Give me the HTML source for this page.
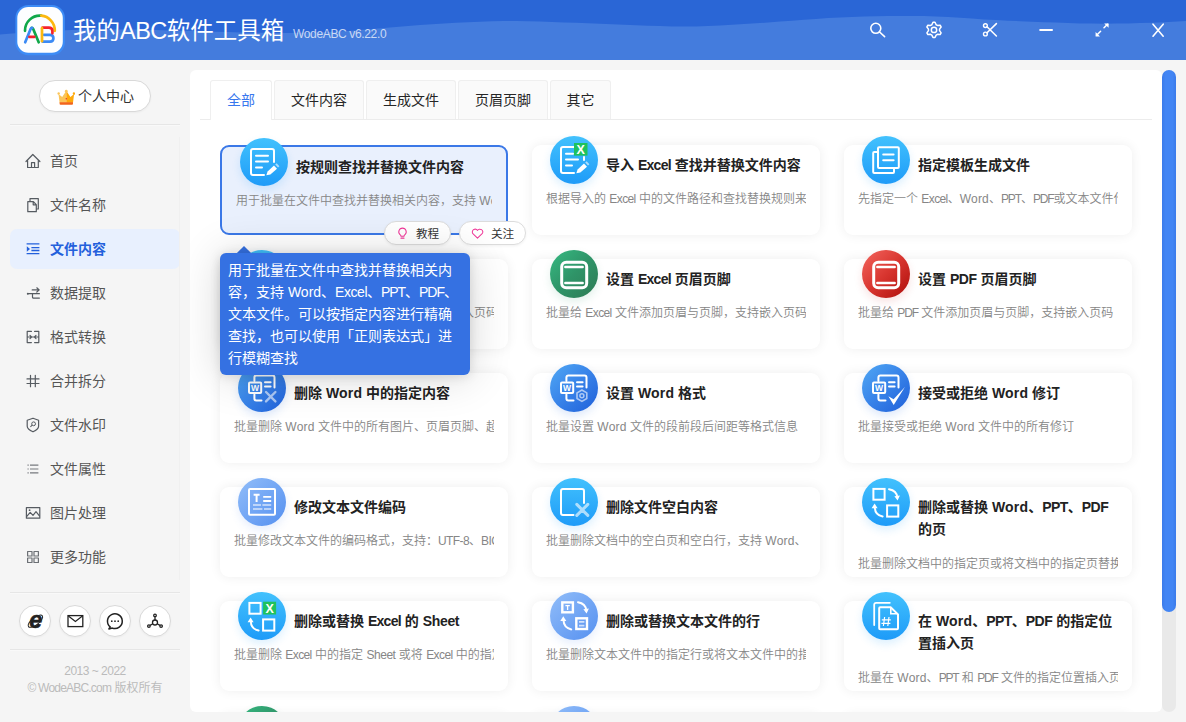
<!DOCTYPE html>
<html lang="zh-CN">
<head>
<meta charset="utf-8">
<title>我的ABC软件工具箱</title>
<style>
*{box-sizing:border-box;margin:0;padding:0}
html,body{width:1186px;height:722px;overflow:hidden;background:#f5f5f5}
body{font-family:"Liberation Sans","Noto Sans CJK SC",sans-serif;font-size:14px;color:#333;position:relative}
.abs{position:absolute}
/* header */
#hd{position:absolute;left:0;top:0;width:1186px;height:60px;background:#2a66d6;overflow:hidden}
#hd svg.wave{position:absolute;left:0;top:0}
#logo{position:absolute;left:14px;top:4px;width:52px;height:52px}
#ttl{position:absolute;left:73px;top:14px;height:34px;line-height:34px;font-size:23.5px;color:#fff;white-space:nowrap;letter-spacing:0}
#ver{position:absolute;left:293px;top:26px;height:16px;line-height:16px;font-size:12px;color:rgba(255,255,255,.72);white-space:nowrap;letter-spacing:-.35px}
.hi{position:absolute;top:21px;width:18px;height:18px}
/* sidebar */
#pc{position:absolute;left:39px;top:80px;width:112px;height:32px;border:1px solid #d9d9d9;border-radius:16px;background:#fff;box-shadow:0 1px 2px rgba(0,0,0,.04)}
#pc span{position:absolute;left:38px;top:0;line-height:30px;font-size:14px;color:#333;white-space:nowrap}
.hr{position:absolute;left:10px;width:170px;height:2px;background:linear-gradient(180deg,#e6e6e6 0,#e6e6e6 50%,#f9f9f9 50%,#f9f9f9 100%)}
#menu{position:absolute;left:10px;top:134px;width:170px;height:446px}
#menu:after{content:"";position:absolute;left:169px;top:3px;width:1px;height:443px;background:#f0f0f0}
.mi{position:absolute;left:0;width:170px;height:40px;border-radius:7px}
.mi svg{position:absolute;left:15px;top:12px;width:16px;height:16px}
.mi span{position:absolute;left:40px;top:0;line-height:40px;font-size:14px;color:#555;white-space:nowrap}
.mi.on{background:#e8f0fe}
.mi.on span{color:#2360dc;font-weight:bold}
.rc{position:absolute;top:605px;width:32px;height:32px;border-radius:16px;background:#fff;border:1px solid #d9d9d9;box-shadow:0 1px 2px rgba(0,0,0,.04)}
.ft{position:absolute;left:0;width:190px;text-align:center;font-size:12px;color:#bbb;line-height:16px;white-space:nowrap}
/* main */
#main{position:absolute;left:190px;top:70px;width:972px;height:642px;background:#fff;border-radius:6px;overflow:hidden}
#sbt{position:absolute;left:1162px;top:70px;width:14px;height:642px;border-radius:7px;background:#e9e9e9}
#sbh{position:absolute;left:1162px;top:70px;width:14px;height:542px;border-radius:7px;background:linear-gradient(90deg,#3b7bea,#4285f4 25%,#4285f4 75%,#3b7bea)}
.tab{position:absolute;top:10px;height:39px;border:1px solid #efefef;border-bottom:none;background:#fafafa;border-radius:3px 3px 0 0;text-align:center;line-height:38px;font-size:14px;color:#262626}
.tab.on{background:#fff;color:#3877ee;height:40px}
#tabline{position:absolute;left:10px;top:49px;width:952px;height:1px;background:#ececec}
.card{position:absolute;width:288px;height:90px;background:#fff;border-radius:9px;box-shadow:0 0 12px rgba(0,0,0,.07)}
.card .ic{position:absolute;left:18px;top:-9px;width:48px;height:48px;border-radius:24px}
.card .ic svg{position:absolute;left:0;top:0;width:48px;height:48px}
.card h3{position:absolute;left:74px;top:9px;width:204px;font-size:14px;line-height:22px;font-weight:bold;color:#222}
.card p{position:absolute;left:14px;top:45px;width:260px;height:18px;line-height:18px;font-size:12px;color:#868686;white-space:nowrap;overflow:hidden;font-weight:350}
.card.two p{top:68px}
.card.sel{border:2px solid #3b78e7;background:#e9f0fd;box-shadow:none}
.card.sel .ic{left:18px;top:-9px}
.card.sel h3{left:74px;top:9px}
.card.sel p{left:14px;top:45px;width:256px}
.g1{background:linear-gradient(180deg,#42c1fd,#1e9bf8);box-shadow:0 4px 9px rgba(40,160,250,.16)}
.g2{background:linear-gradient(135deg,#50a8f4,#3a86ea 45%,#1f5fd9);box-shadow:0 4px 9px rgba(50,120,230,.16)}
.g3{background:linear-gradient(135deg,#91bdf9,#5590f0);box-shadow:0 4px 9px rgba(100,150,240,.16)}
.g4{background:linear-gradient(135deg,#36ba82,#2f9468 50%,#2d7a53);box-shadow:0 4px 9px rgba(40,150,100,.13)}
.g5{background:linear-gradient(135deg,#f4665f,#d8352f 50%,#ad0d0a);box-shadow:0 4px 9px rgba(200,40,40,.13)}
.pill{position:absolute;top:151px;width:67px;height:24px;border:1px solid #dcdcdc;border-radius:12px;background:#fff;box-shadow:0 1px 3px rgba(0,0,0,.06)}
.pill svg{position:absolute;left:11px;top:5px;width:13px;height:13px}
.pill span{position:absolute;left:31px;top:0;line-height:23.5px;font-size:11.6px;color:#333}
#tip{position:absolute;left:30px;top:183px;width:250px;height:122px;background:#3571e2;border-radius:6px;color:#fff;font-size:14px;line-height:22px;padding:6px 8px 0 8px;box-shadow:0 1px 12px rgba(0,0,0,.12),0 2px 44px rgba(0,0,0,.16)}
#tiparrow{position:absolute;left:48.7px;top:178.3px;width:10px;height:10px;background:#3571e2;transform:rotate(45deg)}
i{font-style:normal;letter-spacing:-.6px}
#tip{white-space:nowrap}
</style>
</head>
<body>
<div id="hd">
<svg class="wave" width="1186" height="60" viewBox="0 0 1186 60"><path d="M0 34.5 L12 33.6 L24 32.8 L36 31.9 L48 31.1 L60 30.4 L72 29.9 L84 29.6 L96 29.4 L108 29.4 L120 29.4 L132 29.6 L144 29.8 L156 30.1 L168 30.4 L180 30.7 L192 31.0 L204 31.4 L216 31.8 L228 32.1 L240 32.4 L252 32.6 L264 32.8 L276 32.9 L288 32.9 L300 32.8 L312 32.6 L324 32.2 L336 31.6 L348 30.9 L360 30.0 L372 29.0 L384 28.0 L396 27.0 L408 26.0 L420 25.1 L432 24.2 L444 23.5 L456 22.8 L468 22.2 L480 21.7 L492 21.2 L504 21.0 L516 20.9 L528 21.2 L540 21.6 L552 22.0 L564 22.4 L576 22.8 L588 23.3 L600 23.7 L612 24.2 L624 24.7 L636 25.2 L648 25.7 L660 26.1 L672 26.5 L684 26.6 L696 26.5 L708 26.1 L720 25.5 L732 24.8 L744 24.0 L756 23.3 L768 22.5 L780 21.6 L792 20.8 L804 19.8 L816 19.0 L828 18.1 L840 17.4 L852 16.9 L864 16.5 L876 16.2 L888 16.0 L900 15.9 L912 15.9 L924 16.1 L936 16.4 L948 17.0 L960 17.8 L972 18.6 L984 19.4 L996 20.1 L1008 20.7 L1020 21.2 L1032 21.7 L1044 22.2 L1056 22.6 L1068 23.0 L1080 23.4 L1092 23.6 L1104 23.7 L1116 23.6 L1128 23.4 L1140 23.1 L1152 22.7 L1164 22.2 L1186 21.0 L1186 60 L0 60 Z" fill="#447cdd"/></svg>
<svg id="logo" viewBox="0 0 52 52"><rect x="1.4" y="0.9" width="49.5" height="50.3" rx="13" fill="#3d8cf6"/><rect x="3.3" y="3" width="45.5" height="45.7" rx="11" fill="#fdfeff"/>
<g fill="none" stroke-width="2.7" stroke-linecap="round" stroke-linejoin="round">
<path d="M11 26.8A14.9 14.9 0 0 1 27.2 11.66" stroke="#10a84a"/>
<path d="M40.8 26.8A14.9 14.9 0 0 0 27.2 11.66" stroke="#fcb80f"/>
<path d="M24.7 38.3L19.4 25.4Q18.6 23.7 17.6 23.8" stroke="#10a84a"/>
<path d="M11.2 38.3L16.4 25.4Q17.2 23.7 18.2 23.8" stroke="#3b8af5"/>
<path d="M15.4 32.9H20.3" stroke="#f5222d"/>
<path d="M30 30.8H36Q39.4 30.8 39.4 34.2Q39.4 37.6 36 37.6H28.6" stroke="#3b8af5"/>
<path d="M28.6 23.7H34.8Q38.4 23.7 38.4 27V29.2" stroke="#f5222d"/>
<path d="M28 24.2V37.2" stroke="#fcb80f"/>
</g></svg>
<svg class="abs" style="left:0;top:0" width="1186" height="60" viewBox="0 0 1186 60">
<circle cx="875.8" cy="28.3" r="5" stroke="#fff" fill="none" stroke-width="1.6" stroke-linecap="round" stroke-linejoin="round"/><path d="M879.6 32L884.6 36.6" stroke="#fff" fill="none" stroke-width="1.6" stroke-linecap="round" stroke-linejoin="round"/>
<path d="M932.99 22.27L935.01 22.27L936.14 24.73L937.41 25.46L940.11 25.21L941.11 26.95L939.55 29.17L939.55 30.63L941.11 32.85L940.11 34.59L937.41 34.34L936.14 35.07L935.01 37.53L932.99 37.53L931.86 35.07L930.59 34.34L927.89 34.59L926.89 32.85L928.45 30.63L928.45 29.17L926.89 26.95L927.89 25.21L930.59 25.46L931.86 24.73Z" stroke="#fff" fill="none" stroke-width="1.5" stroke-linejoin="round"/><circle cx="934" cy="29.9" r="2.7" stroke="#fff" fill="none" stroke-width="1.5"/>
<circle cx="985.4" cy="25.6" r="1.9" stroke="#fff" fill="none" stroke-width="1.4"/><circle cx="985.4" cy="34" r="1.9" stroke="#fff" fill="none" stroke-width="1.4"/><path d="M987 26.8L996.4 36M987 32.8L996.4 23.6" stroke="#fff" fill="none" stroke-width="1.6" stroke-linecap="round" stroke-linejoin="round"/>
<path d="M1040.2 30H1052" stroke="#fff" stroke-width="2" stroke-linecap="round"/>
<path d="M1096.6 35.2L1100.6 31.2M1104 27.8L1107.6 24.2" stroke="#fff" stroke-width="1.5" stroke-linecap="round"/><path d="M1095.6 32V36.4H1100ZM1104.2 23.4H1108.6V27.8Z" fill="#fff"/>
<path d="M1153 24.2L1163.2 36.2M1163.2 24.2L1153 36.2" stroke="#fff" stroke-width="1.6" stroke-linecap="round"/>
</svg>
<div id="ttl">我的<i style="letter-spacing:-.5px">ABC</i>软件工具箱</div>
<div id="ver">WodeABC v6.22.0</div>
</div>

<!-- sidebar -->
<div id="pc"><svg class="abs" style="left:16.5px;top:8px" width="18.6" height="17.6" viewBox="0 0 20 18" preserveAspectRatio="none"><path d="M1.6 5.2L5.6 8.2L10 1.8V14H2.8Z" fill="#fbc55a"/><path d="M18.4 5.2L14.4 8.2L10 1.8V14H17.2Z" fill="#fea90b"/><circle cx="10" cy="2.2" r="1.5" fill="#fbc55a"/><circle cx="1.8" cy="4.6" r="1.3" fill="#fbc55a"/><circle cx="18.2" cy="4.6" r="1.3" fill="#fea90b"/><path d="M2.8 13.6H17.2V15.2A1 1 0 0 1 16.2 16.2H3.8A1 1 0 0 1 2.8 15.2Z" fill="#f2641b"/><circle cx="10" cy="10" r=".8" fill="#e8352a"/></svg><span>个人中心</span></div>
<div class="hr" style="top:124px"></div>
<div id="menu">
<div class="mi" style="top:7px"><svg viewBox="0 0 16 16"><path d="M1 8.5L7.8 1.5L14.9 8.5M2.6 7.4V14.5H13.3V7.4M6.5 14.5V9.6H9.6V14.5" stroke="#565b61" fill="none" stroke-width="1.2" stroke-linejoin="round" stroke-linecap="round"/></svg><span>首页</span></div>
<div class="mi" style="top:51px"><svg viewBox="0 0 16 16"><path d="M2.8 4.6H8.4L11.3 7.6V14.7H2.8Z M8.2 4.8V7.8H11.2" stroke="#565b61" fill="none" stroke-width="1.2" stroke-linejoin="round" stroke-linecap="round"/><path d="M5 4.4V1.6H13.3V12H11.6" stroke="#565b61" fill="none" stroke-width="1.2" stroke-linejoin="round" stroke-linecap="round"/></svg><span>文件名称</span></div>
<div class="mi on" style="top:95px"><svg viewBox="0 0 16 16"><path d="M1.6 2.9H14.4M6.4 6.6H14.4M6.4 9.5H14.4M1.6 12.6H14.4" stroke="#2360dc" stroke-width="1.3" fill="none"/><path d="M1.8 5.2L5 8L1.8 10.8Z" fill="#2360dc"/></svg><span>文件内容</span></div>
<div class="mi" style="top:139px"><svg viewBox="0 0 16 16"><circle cx="2.8" cy="8.7" r="1" fill="#565b61"/><path d="M3 8.7H14.4M7.2 4.9H14M11.8 2.8L14.2 4.9L11.8 7M7.5 8.7V12A1 1 0 0 0 8.5 13.1H14.4" stroke="#565b61" fill="none" stroke-width="1.2" stroke-linejoin="round" stroke-linecap="round"/></svg><span>数据提取</span></div>
<div class="mi" style="top:183px"><svg viewBox="0 0 16 16"><path d="M6.4 2.4H2.2V13.6H6.4M9.6 2.4H13.8V13.6H9.6M2.2 8H13.8M5 6.4L6.6 8L5 9.6M11 6.4L9.4 8L11 9.6" stroke="#565b61" fill="none" stroke-width="1.2" stroke-linejoin="round" stroke-linecap="round"/></svg><span>格式转换</span></div>
<div class="mi" style="top:227px"><svg viewBox="0 0 16 16"><path d="M5.5 2.3V13.7M10.3 2.3V13.7M2 5.9H14M2 10.5H14" stroke="#565b61" fill="none" stroke-width="1.2" stroke-linejoin="round" stroke-linecap="round"/></svg><span>合并拆分</span></div>
<div class="mi" style="top:271px"><svg viewBox="0 0 16 16"><path d="M2.2 3.2L8 1.2L13.6 3.2V9.2C13.6 11.6 11 13.4 8 14.8C5 13.4 2.2 11.6 2.2 9.2Z" stroke="#565b61" fill="none" stroke-width="1.2" stroke-linejoin="round" stroke-linecap="round"/><circle cx="8.6" cy="6.8" r="1.9" stroke="#565b61" stroke-width="1" fill="none"/><path d="M7.2 8.2L5.4 9.8" stroke="#565b61" stroke-width="1.1"/></svg><span>文件水印</span></div>
<div class="mi" style="top:315px"><svg viewBox="0 0 16 16"><path d="M5 4.1H13.4M5 8H13.4M5 11.9H13.4" stroke="#777a7f" stroke-width="1.1" fill="none"/><path d="M2.5 4.1H3.7M2.5 8H3.7M2.5 11.9H3.7" stroke="#777a7f" stroke-width="1.2"/></svg><span>文件属性</span></div>
<div class="mi" style="top:359px"><svg viewBox="0 0 16 16"><rect x="1.4" y="2.6" width="13.4" height="10.6" stroke="#565b61" fill="none" stroke-width="1.2" stroke-linejoin="round" stroke-linecap="round"/><path d="M1.8 11.4L5.2 7.4L8 10.4L11 6.6L14.4 10.8" stroke="#565b61" fill="none" stroke-width="1.2" stroke-linejoin="round" stroke-linecap="round"/><circle cx="4.6" cy="5.2" r=".9" fill="#565b61"/></svg><span>图片处理</span></div>
<div class="mi" style="top:403px"><svg viewBox="0 0 16 16"><path d="M2.6 2.5H7V7H2.6ZM9 2.5H13.4V7H9ZM2.6 9H7V13.5H2.6ZM9 9H13.4V13.5H9Z" stroke="#6c7075" stroke-width="1.2" fill="none" stroke-linejoin="round"/></svg><span>更多功能</span></div>
</div>
<div class="hr" style="top:592px"></div>
<div class="rc" style="left:19px"><svg class="abs" style="left:0;top:0" width="30" height="30" viewBox="0 0 30 30"><ellipse cx="15.4" cy="15.2" rx="8.8" ry="3.6" transform="rotate(-38 15.4 15.2)" stroke="#222" stroke-width="1" fill="none"/><text x="15.9" y="22" text-anchor="middle" font-family="Liberation Sans,sans-serif" font-weight="bold" font-style="italic" font-size="23.5" fill="#222" stroke="#222" stroke-width=".5">e</text></svg></div>
<div class="rc" style="left:59px"><svg class="abs" style="left:0;top:0" width="30" height="30" viewBox="0 0 30 30"><rect x="8" y="9.6" width="14.8" height="11" stroke="#222" fill="none" stroke-width="1.3"/><path d="M8.4 10L15.4 15.4L22.4 10" stroke="#222" fill="none" stroke-width="1.2"/></svg></div>
<div class="rc" style="left:99px"><svg class="abs" style="left:0;top:0" width="30" height="30" viewBox="0 0 30 30"><path d="M10.2 20.9A7.4 7.4 0 1 1 12.3 22.1L8.9 22.9Z" stroke="#222" fill="none" stroke-width="1.5" stroke-linejoin="round" stroke-linecap="round"/><circle cx="11.8" cy="15.2" r=".85" fill="#222"/><circle cx="15" cy="15.2" r=".85" fill="#222"/><circle cx="18.2" cy="15.2" r=".85" fill="#222"/></svg></div>
<div class="rc" style="left:139px"><svg class="abs" style="left:0;top:0" width="30" height="30" viewBox="0 0 30 30"><g stroke="#222" fill="none" stroke-width="1.3"><circle cx="15" cy="16.5" r="2.5"/><circle cx="15" cy="9.4" r="1.3"/><circle cx="8.9" cy="20.1" r="1.3"/><circle cx="21.1" cy="20.1" r="1.3"/><path d="M15 10.7V14M12.8 17.8L10.1 19.4M17.2 17.8L19.9 19.4"/></g></svg></div>
<div class="hr" style="top:649px"></div>
<div class="ft" style="top:663px;letter-spacing:-.5px">2013 ~ 2022</div>
<div class="ft" style="top:680px"><i style="letter-spacing:-.8px">© WodeABC.com</i> 版权所有</div>

<!-- main -->
<div id="main">
<div id="tabline"></div>
<div class="tab on" style="left:20px;width:62px">全部</div>
<div class="tab" style="left:84px;width:90px">文件内容</div>
<div class="tab" style="left:176px;width:90px">生成文件</div>
<div class="tab" style="left:268px;width:90px">页眉页脚</div>
<div class="tab" style="left:360px;width:61px">其它</div>

<div class="card sel" style="left:30px;top:75px"><div class="ic g1"><svg viewBox="0 0 48 48"><path d="M34 24V13a2 2 0 0 0-2-2H13a2 2 0 0 0-2 2v22a2 2 0 0 0 2 2h11" stroke="#fff" fill="none" stroke-width="2" stroke-linecap="round" stroke-linejoin="round"/><path d="M16 17.8H28M16 23.4H28M16 29.4H22" stroke="#fff" fill="none" stroke-width="2" stroke-linecap="round" stroke-linejoin="round"/><path d="M26.3 37.2 L27.6 33.6 L34 27.6 L37 30.8 L30.4 36.4 Z" fill="#fff"/><path d="M35.2 26.4 L36.6 25.2 L39.4 28.2 L38 29.6 Z" fill="#fff" opacity=".6"/></svg></div><h3>按规则查找并替换文件内容</h3><p>用于批量在文件中查找并替换相关内容，支持 <i style="letter-spacing:0.2px">Word</i>、<i style="letter-spacing:-0.6px">Excel</i>、<i style="letter-spacing:-1.15px">PPT</i></p></div>
<div class="card" style="left:342px;top:75px"><div class="ic g1"><svg viewBox="0 0 48 48"><path d="M25 11H13a2 2 0 0 0-2 2v22a2 2 0 0 0 2 2h11M34 21V24" stroke="#fff" fill="none" stroke-width="2" stroke-linecap="round" stroke-linejoin="round"/><path d="M16 17.8H23M16 23.4H28M16 29.4H22" stroke="#fff" fill="none" stroke-width="2" stroke-linecap="round" stroke-linejoin="round"/><path d="M26.3 37.2 L27.6 33.6 L34 27.6 L37 30.8 L30.4 36.4 Z" fill="#fff"/><path d="M35.2 26.4 L36.6 25.2 L39.4 28.2 L38 29.6 Z" fill="#fff" opacity=".6"/><rect x="24" y="7" width="13.5" height="12.6" fill="#1fc25d"/><text x="30.75" y="17.8" text-anchor="middle" font-family="Liberation Sans,sans-serif" font-weight="bold" font-size="12.5" fill="#fff">X</text></svg></div><h3>导入 <i style="letter-spacing:-0.7px">Excel</i> 查找并替换文件内容</h3><p>根据导入的 <i style="letter-spacing:-0.6px">Excel</i> 中的文件路径和查找替换规则来批量处理</p></div>
<div class="card" style="left:654px;top:75px"><div class="ic g1"><svg viewBox="0 0 48 48"><path d="M15 16H12.2a1 1 0 0 0-1 1V36a1 1 0 0 0 1 1H31a1 1 0 0 0 1-1V33.5" stroke="#fff" fill="none" stroke-width="2" stroke-linecap="round" stroke-linejoin="round"/><rect x="16" y="11.3" width="20.8" height="20.8" rx="1" stroke="#fff" fill="none" stroke-width="2" stroke-linecap="round" stroke-linejoin="round"/><path d="M21.2 18.6H31.6M21.2 24.2H31.6" stroke="#fff" fill="none" stroke-width="2" stroke-linecap="round" stroke-linejoin="round"/></svg></div><h3>指定模板生成文件</h3><p>先指定一个 <i style="letter-spacing:-0.6px">Excel</i>、<i style="letter-spacing:0.2px">Word</i>、<i style="letter-spacing:-1.15px">PPT</i>、<i style="letter-spacing:-1.15px">PDF</i>或文本文件作为模板</p></div>

<div class="card" style="left:30px;top:189px"><div class="ic g1"></div><h3>设置 <i style="letter-spacing:0.2px">Word</i> 页眉页脚</h3><p>批量给 <i style="letter-spacing:0.2px">Word</i> 文件添加页眉与页脚，支持嵌入页码</p></div>
<div class="card" style="left:342px;top:189px"><div class="ic g4"><svg viewBox="0 0 48 48"><rect x="11.7" y="12.2" width="25" height="25.6" rx="4.5" stroke="#fff" fill="none" stroke-width="3"/><path d="M15.4 17H32.6M15.4 33H32.6" stroke="#fff" stroke-width="2.6" stroke-linecap="round" fill="none"/></svg></div><h3>设置 <i style="letter-spacing:-0.7px">Excel</i> 页眉页脚</h3><p>批量给 <i style="letter-spacing:-0.6px">Excel</i> 文件添加页眉与页脚，支持嵌入页码</p></div>
<div class="card" style="left:654px;top:189px"><div class="ic g5"><svg viewBox="0 0 48 48"><rect x="11.7" y="12.2" width="25" height="25.6" rx="4.5" stroke="#fff" fill="none" stroke-width="3"/><path d="M15.4 17H32.6M15.4 33H32.6" stroke="#fff" stroke-width="2.6" stroke-linecap="round" fill="none"/></svg></div><h3>设置 <i style="letter-spacing:-0.4px">PDF</i> 页眉页脚</h3><p>批量给 <i style="letter-spacing:-1.15px">PDF</i> 文件添加页眉与页脚，支持嵌入页码</p></div>

<div class="card" style="left:30px;top:303px"><div class="ic g2"><svg viewBox="0 0 48 48"><path d="M16.4 17V13.6a2 2 0 0 1 2-2H34.5a2 2 0 0 1 2 2V23.5M16.4 30.5V34.5a2 2 0 0 0 2 2H23.5" stroke="#fff" fill="none" stroke-width="2" stroke-linecap="round" stroke-linejoin="round"/><rect x="11" y="18.4" width="12.2" height="10.6" rx="1" stroke="#fff" fill="none" stroke-width="2" stroke-linecap="round" stroke-linejoin="round"/><text x="17.1" y="27.4" text-anchor="middle" font-family="Liberation Sans,sans-serif" font-weight="bold" font-size="8.5" fill="#fff">W</text><path d="M27 18.2H32.6M27 22.6H32.6" stroke="#fff" fill="none" stroke-width="2" stroke-linecap="round" stroke-linejoin="round"/><path d="M28 28L37.4 37.4M37.4 28L28 37.4" stroke="#fff" stroke-opacity=".6" stroke-width="2.4" stroke-linecap="round"/></svg></div><h3>删除 <i style="letter-spacing:0.2px">Word</i> 中的指定内容</h3><p>批量删除 <i style="letter-spacing:0.2px">Word</i> 文件中的所有图片、页眉页脚、超链接等内容</p></div>
<div class="card" style="left:342px;top:303px"><div class="ic g2"><svg viewBox="0 0 48 48"><path d="M16.4 17V13.6a2 2 0 0 1 2-2H34.5a2 2 0 0 1 2 2V23.5M16.4 30.5V34.5a2 2 0 0 0 2 2H23.5" stroke="#fff" fill="none" stroke-width="2" stroke-linecap="round" stroke-linejoin="round"/><rect x="11" y="18.4" width="12.2" height="10.6" rx="1" stroke="#fff" fill="none" stroke-width="2" stroke-linecap="round" stroke-linejoin="round"/><text x="17.1" y="27.4" text-anchor="middle" font-family="Liberation Sans,sans-serif" font-weight="bold" font-size="8.5" fill="#fff">W</text><path d="M27 18.2H32.6M27 22.6H32.6" stroke="#fff" fill="none" stroke-width="2" stroke-linecap="round" stroke-linejoin="round"/><path d="M31.9 26L36.8 28.85V34.55L31.9 37.4L27 34.55V28.85Z" stroke="#fff" stroke-opacity=".6" stroke-width="1.6" fill="none" stroke-linejoin="round"/><circle cx="31.9" cy="31.7" r="2" stroke="#fff" stroke-opacity=".6" stroke-width="1.5" fill="none"/></svg></div><h3>设置 <i style="letter-spacing:0.2px">Word</i> 格式</h3><p>批量设置 <i style="letter-spacing:0.2px">Word</i> 文件的段前段后间距等格式信息</p></div>
<div class="card" style="left:654px;top:303px"><div class="ic g2"><svg viewBox="0 0 48 48"><path d="M16.4 17V13.6a2 2 0 0 1 2-2H34.5a2 2 0 0 1 2 2V23.5M16.4 30.5V34.5a2 2 0 0 0 2 2H23.5" stroke="#fff" fill="none" stroke-width="2" stroke-linecap="round" stroke-linejoin="round"/><rect x="11" y="18.4" width="12.2" height="10.6" rx="1" stroke="#fff" fill="none" stroke-width="2" stroke-linecap="round" stroke-linejoin="round"/><text x="17.1" y="27.4" text-anchor="middle" font-family="Liberation Sans,sans-serif" font-weight="bold" font-size="8.5" fill="#fff">W</text><path d="M27 18.2H32.6M27 22.6H32.6" stroke="#fff" fill="none" stroke-width="2" stroke-linecap="round" stroke-linejoin="round"/><path d="M26.4 32.2L31.6 35.2L42.9 23L31.7 41Z" fill="#fff"/></svg></div><h3>接受或拒绝 <i style="letter-spacing:0.2px">Word</i> 修订</h3><p>批量接受或拒绝 <i style="letter-spacing:0.2px">Word</i> 文件中的所有修订</p></div>

<div class="card" style="left:30px;top:417px"><div class="ic g3"><svg viewBox="0 0 48 48"><rect x="11" y="11" width="26" height="25.8" rx="1" stroke="#fff" fill="none" stroke-width="2" stroke-linecap="round" stroke-linejoin="round"/><path d="M15.6 16.8H21.6M18.6 16.8V24" stroke="#fff" stroke-width="2" fill="none"/><path d="M25.2 18.9H33.2M25.2 23H33.2" stroke="#fff" stroke-width="1.8" fill="none"/><path d="M15 27H23M24.4 27H33.2M15 31H24.4M26 31H33.2" stroke="#fff" stroke-opacity=".7" stroke-width="1.6" fill="none"/></svg></div><h3>修改文本文件编码</h3><p>批量修改文本文件的编码格式，支持：<i>UTF-8</i>、<i>BIG5</i>、<i>GBK</i> 等</p></div>
<div class="card" style="left:342px;top:417px"><div class="ic g1"><svg viewBox="0 0 48 48"><path d="M34 25V13a2 2 0 0 0-2-2H13a2 2 0 0 0-2 2V35a2 2 0 0 0 2 2H23.5" stroke="#fff" fill="none" stroke-width="2" stroke-linecap="round" stroke-linejoin="round"/><path d="M26.8 26.4L37.8 37.4M37.8 26.4L26.8 37.4" stroke="#fff" stroke-opacity=".62" stroke-width="3" stroke-linecap="round"/></svg></div><h3>删除文件空白内容</h3><p>批量删除文档中的空白页和空白行，支持 <i style="letter-spacing:0.2px">Word</i>、<i style="letter-spacing:-0.6px">Excel</i></p></div>
<div class="card two" style="left:654px;top:417px"><div class="ic g1"><svg viewBox="0 0 48 48"><rect x="11.4" y="10.9" width="11.2" height="10.8" stroke="#fff" stroke-width="2" fill="none"/><rect x="25.1" y="27.4" width="11.2" height="11.2" stroke="#fff" stroke-width="2" fill="none"/><path d="M27 11.2C32 12 35 15.5 35.3 19.5" stroke="#fff" stroke-width="2" fill="none" stroke-linecap="round"/><path d="M32.4 18.2L35.6 22.6L37.9 17.6Z" fill="#fff"/><path d="M20.6 38.6C16 37.6 13 34.5 12.8 29.5" stroke="#fff" stroke-width="2" fill="none" stroke-linecap="round"/><path d="M9.6 30.2L12.6 25.4L15.6 30.2Z" fill="#fff"/></svg></div><h3>删除或替换 <i style="letter-spacing:0.2px">Word</i>、<i style="letter-spacing:-0.6px">PPT</i>、<i style="letter-spacing:-0.4px">PDF</i> 的页</h3><p>批量删除文档中的指定页或将文档中的指定页替换为其它内容</p></div>

<div class="card" style="left:30px;top:531px"><div class="ic g1"><svg viewBox="0 0 48 48"><rect x="11.4" y="10.9" width="11.2" height="10.8" stroke="#fff" stroke-width="2" fill="none"/><rect x="25.1" y="27.4" width="11.2" height="11.2" stroke="#fff" stroke-width="2" fill="none"/><path d="M20.6 38.6C16 37.6 13 34.5 12.8 29.5" stroke="#fff" stroke-width="2" fill="none" stroke-linecap="round"/><path d="M9.6 30.2L12.6 25.4L15.6 30.2Z" fill="#fff"/><rect x="25.1" y="9.7" width="13" height="12.8" fill="#1fc25d"/><text x="31.6" y="20.6" text-anchor="middle" font-family="Liberation Sans,sans-serif" font-weight="bold" font-size="12.5" fill="#fff">X</text></svg></div><h3>删除或替换 <i style="letter-spacing:-0.7px">Excel</i> 的 <i style="letter-spacing:-0.35px">Sheet</i></h3><p>批量删除 <i style="letter-spacing:-0.6px">Excel</i> 中的指定 <i style="letter-spacing:-0.45px">Sheet</i> 或将 <i style="letter-spacing:-0.6px">Excel</i> 中的指定 <i style="letter-spacing:-0.45px">Sheet</i> 替换</p></div>
<div class="card" style="left:342px;top:531px"><div class="ic g3"><svg viewBox="0 0 48 48"><g transform="translate(1,-1)"><rect x="11.3" y="11.4" width="10.6" height="9.9" stroke="#fff" stroke-width="2.4" fill="none"/><path d="M14.4 14.6H18.8M16.6 14.6V19" stroke="#fff" stroke-width="1.3" fill="none"/><path d="M27 11.2C32 12 35 15.5 35.3 19.5" stroke="#fff" stroke-width="2" fill="none" stroke-linecap="round"/><path d="M32.4 18.2L35.6 22.6L37.9 17.6Z" fill="#fff"/></g><rect x="26.3" y="26.3" width="10.7" height="10.7" stroke="#fff" stroke-width="2.4" fill="none"/><path d="M29 29.8H34.4M29 33.6H34.4" stroke="#fff" stroke-opacity=".7" stroke-width="1.8" fill="none"/><g transform="translate(.7,-1.2)"><path d="M20.6 38.6C16 37.6 13 34.5 12.8 29.5" stroke="#fff" stroke-width="2" fill="none" stroke-linecap="round"/><path d="M9.6 30.2L12.6 25.4L15.6 30.2Z" fill="#fff"/></g></svg></div><h3>删除或替换文本文件的行</h3><p>批量删除文本文件中的指定行或将文本文件中的指定行替换</p></div>
<div class="card two" style="left:654px;top:531px"><div class="ic g1"><svg viewBox="0 0 48 48"><path d="M27.8 10.8H14.2a2 2 0 0 0-2 2V33" stroke="#fff" stroke-width="1.8" fill="none" stroke-linecap="round"/><path d="M28.6 15.2H18.2a1 1 0 0 0-1 1V36.2a1 1 0 0 0 1 1H35a1 1 0 0 0 1-1V22.4Z" stroke="#fff" fill="none" stroke-width="2" stroke-linecap="round" stroke-linejoin="round"/><path d="M28.8 15.4V21.8H35.8" stroke="#fff" stroke-width="1.6" fill="none"/><path d="M22.6 25L21.4 34M27 25L25.8 34M19.8 27.8H28.8M19.4 31.4H28.4" stroke="#fff" stroke-width="1.2" fill="none"/></svg></div><h3>在 <i style="letter-spacing:0.2px">Word</i>、<i style="letter-spacing:-0.6px">PPT</i>、<i style="letter-spacing:-0.4px">PDF</i> 的指定位置插入页</h3><p>批量在 <i style="letter-spacing:0.2px">Word</i>、<i style="letter-spacing:-1.15px">PPT</i> 和 <i style="letter-spacing:-1.15px">PDF</i> 文件的指定位置插入页面</p></div>

<div class="card" style="left:30px;top:645px"><div class="ic g4"></div><h3>&<i>nbsp</i>;</h3></div>
<div class="card" style="left:342px;top:645px"><div class="ic g3"></div><h3>&<i>nbsp</i>;</h3></div>
<div class="card" style="left:654px;top:645px"><h3>&<i>nbsp</i>;</h3></div>

<div class="pill" style="left:194px"><svg viewBox="0 0 14 14"><path d="M7 1.2A4 4 0 0 0 4.6 8.4C5.2 8.9 5.4 9.4 5.4 10H8.6C8.6 9.4 8.8 8.9 9.4 8.4A4 4 0 0 0 7 1.2Z" stroke="#f0399a" stroke-width="1.1" fill="none"/><path d="M5.4 12H8.6" stroke="#f0399a" stroke-width="1.2" stroke-linecap="round"/></svg><span>教程</span></div>
<div class="pill" style="left:269px"><svg viewBox="0 0 14 14"><path d="M7 12L2 7.2A3 3 0 0 1 7 3.6A3 3 0 0 1 12 7.2Z" stroke="#f0399a" stroke-width="1.1" fill="none" stroke-linejoin="round"/></svg><span>关注</span></div>
<div id="tiparrow"></div>
<div id="tip">用于批量在文件中查找并替换相关内<br>容，支持 <i style="letter-spacing:0px">Word</i>、<i style="letter-spacing:-0.45px">Excel</i>、<i style="letter-spacing:-1.1px">PPT</i>、<i style="letter-spacing:-1.0px">PDF</i>、<br>文本文件。可以按指定内容进行精确<br>查找，也可以使用「正则表达式」进<br>行模糊查找</div>
</div>
<div id="sbt"></div><div id="sbh"></div>
</body>
</html>
